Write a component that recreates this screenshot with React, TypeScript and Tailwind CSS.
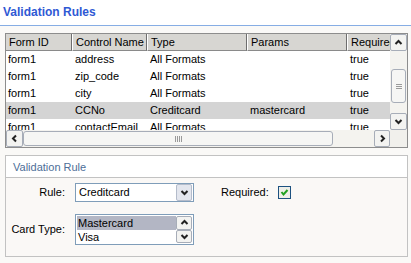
import React from "react";

type Dir = "up" | "down" | "left" | "right";

const arrowPts: Record<Dir, string> = {
  up: "1.5,6 4.5,3 7.5,6",
  down: "1.5,3 4.5,6 7.5,3",
  left: "6,1.5 3,4.5 6,7.5",
  right: "3,1.5 6,4.5 3,7.5",
};

function Arrow({ dir }: { dir: Dir }) {
  return (
    <svg width="9" height="9" viewBox="0 0 9 9">
      <polyline points={arrowPts[dir]} fill="none" stroke="#222" strokeWidth="2" />
    </svg>
  );
}

function ScrollBtn({ dir, className = "" }: { dir: Dir; className?: string }) {
  return (
    <div
      className={`flex items-center justify-center rounded-[2px] border border-[#a7adb8] bg-[#f3f3f1] ${className}`}
    >
      <Arrow dir={dir} />
    </div>
  );
}

const rows = [
  ["form1", "address", "All Formats", "", "true"],
  ["form1", "zip_code", "All Formats", "", "true"],
  ["form1", "city", "All Formats", "", "true"],
  ["form1", "CCNo", "Creditcard", "mastercard", "true"],
  ["form1", "contactEmail", "All Formats", "", "true"],
];

const headers = ["Form ID", "Control Name", "Type", "Params", "Required"];

export default function App() {
  return (
    <div className="h-[263px] w-[411px] overflow-hidden bg-[#faf9f7] font-['Liberation_Sans',Arial,sans-serif] text-[11px] text-black">
      {/* title */}
      <div className="h-[26px] border-b border-[#86ade4] bg-white pl-[3px] pt-[5px] text-[12px] font-bold leading-[14px] text-[#2f59d4]">
        Validation Rules
      </div>

      {/* grid */}
      <div className="ml-[5px] mt-[7px] flex h-[115px] w-[403px] flex-col border border-[#8d8d8d] bg-white">
        <div className="flex h-[96px]">
          <div className="w-[384px] overflow-hidden">
            <div className="grid w-[401px] grid-cols-[66px_75px_100px_100px_60px]">
              {headers.map((h, i) => (
                <div
                  key={h}
                  className={`h-[17px] overflow-hidden whitespace-nowrap border-b border-r border-b-[#8a8a8a] border-r-[#6e6e6e] bg-[#d7d6d2] pl-[3px] leading-[16px] ${
                    i > 0 ? "border-l border-l-white" : ""
                  }`}
                >
                  {h}
                </div>
              ))}
              {rows.map((r, ri) =>
                r.map((c, ci) => (
                  <div
                    key={`${ri}-${ci}`}
                    className={`h-[17px] whitespace-nowrap pl-[2px] leading-[17px] ${
                      ri === 3 ? "bg-[#d4d4d4]" : ""
                    } ${ci > 0 ? "pl-[3px]" : ""}`}
                  >
                    {c}
                  </div>
                ))
              )}
            </div>
          </div>
          {/* vertical scrollbar */}
          <div className="flex w-[17px] flex-col bg-[#f4f3ef]">
            <ScrollBtn dir="up" className="h-[17px]" />
            <div className="flex flex-1 flex-col px-[1px] pt-[18px] pb-[10px]">
              <div className="flex h-[34px] flex-col items-center justify-center gap-[1px] rounded-[3px] border border-[#a7adb8] bg-[#f6f6f4]">
                <div className="h-px w-[6px] bg-[#9a9a9a]" />
                <div className="h-px w-[6px] bg-[#9a9a9a]" />
                <div className="h-px w-[6px] bg-[#9a9a9a]" />
              </div>
            </div>
            <ScrollBtn dir="down" className="h-[17px]" />
          </div>
        </div>
        {/* horizontal scrollbar */}
        <div className="flex h-[17px] bg-[#f4f3ef]">
          <div className="flex w-[384px]">
            <ScrollBtn dir="left" className="w-[17px]" />
            <div className="flex flex-1 py-[1px] pr-[41px]">
              <div className="flex flex-1 items-center justify-center gap-[1px] rounded-[3px] border border-[#a7adb8] bg-[#f6f6f4]">
                <div className="h-[6px] w-px bg-[#9a9a9a]" />
                <div className="h-[6px] w-px bg-[#9a9a9a]" />
                <div className="h-[6px] w-px bg-[#9a9a9a]" />
                <div className="h-[6px] w-px bg-[#9a9a9a]" />
              </div>
            </div>
            <ScrollBtn dir="right" className="w-[16px]" />
          </div>
          <div className="flex-1 bg-[#f1f0ec]" />
        </div>
      </div>

      {/* fieldset */}
      <div className="ml-[5px] mt-[7px] h-[102px] w-[403px] border border-[#c2c2c2] bg-[#faf8f6]">
        <div className="h-[22px] border-b border-[#c2c2c2] bg-white pl-[7px] pt-[4px] leading-[14px] text-[#4d6e98]">
          Validation Rule
        </div>
        <div className="flex flex-col pt-[5px]">
          <div className="flex items-center">
            <div className="w-[59px] text-right">Rule:</div>
            <div className="ml-[10px] flex h-[19px] w-[119px] items-center border border-[#7f9db9] bg-white">
              <div className="flex-1 pl-[3px] leading-[17px]">Creditcard</div>
              <div className="mr-px flex h-[17px] w-[16px] items-center justify-center rounded-[2px] border border-[#b4bccb] bg-[#e3e6ee]">
                <Arrow dir="down" />
              </div>
            </div>
            <div className="ml-[27px]">Required:</div>
            <div className="ml-[9px] flex h-[13px] w-[13px] items-center justify-center border border-[#1c5180] bg-[#eeeee8]">
              <svg width="9" height="9" viewBox="0 0 9 9">
                <polyline points="1.5,4 3.5,6.5 7.5,2" fill="none" stroke="#21a121" strokeWidth="2" />
              </svg>
            </div>
          </div>
          <div className="mt-[12px] flex items-center">
            <div className="w-[59px] text-right">Card Type:</div>
            <div className="ml-[10px] flex h-[31px] w-[119px] border border-[#7f9db9] bg-white p-px">
              <div className="flex flex-1 flex-col">
                <div className="h-[14px] bg-[#b3b6c4] pl-[1px] leading-[14px]">Mastercard</div>
                <div className="h-[14px] pl-[1px] leading-[14px]">Visa</div>
              </div>
              <div className="flex w-[16px] flex-col">
                <ScrollBtn dir="up" className="h-[14px]" />
                <ScrollBtn dir="down" className="h-[14px] border-[#444]" />
              </div>
            </div>
          </div>
        </div>
      </div>
    </div>
  );
}
